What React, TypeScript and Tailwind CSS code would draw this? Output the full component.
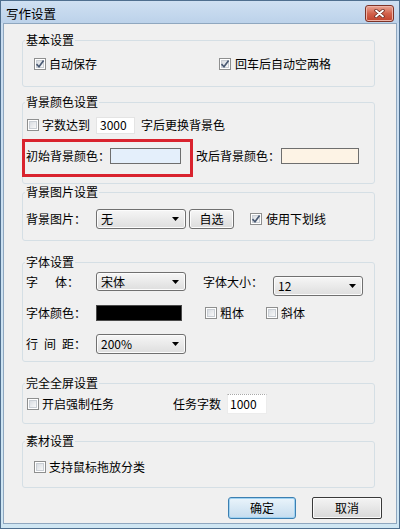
import React from 'react';

function Check({ checked = false }: { checked?: boolean }) {
  return (
    <span className="flex h-[12px] w-[12px] shrink-0 items-center justify-center border border-[#8e8f8f] bg-white">
      <span className="flex h-[8px] w-[8px] items-center justify-center border border-[#c9ced4] bg-gradient-to-br from-[#d9dde2] to-[#f8f8f8]">
        {checked && (
          <svg width="10" height="10" viewBox="0 0 10 10" className="overflow-visible">
            <path d="M1.5 5.2 L4 7.8 L8.6 1.6" fill="none" stroke="#4a5a73" strokeWidth="1.7" />
          </svg>
        )}
      </span>
    </span>
  );
}

function Combo({ value, w = 'w-[90px]', h = 'h-[20px]' }: { value: string; w?: string; h?: string }) {
  return (
    <div
      className={`${w} ${h} flex shrink-0 items-center justify-between rounded-[3px] border border-[#707070] bg-gradient-to-b from-[#f6f6f6] to-[#dedede] pl-[4px] pr-[6px] shadow-[inset_0_0_0_1px_#fcfcfc]`}
    >
      <span>{value}</span>
      <svg width="7" height="4" viewBox="0 0 7 4">
        <polygon points="0,0 7,0 3.5,4" fill="#000" />
      </svg>
    </div>
  );
}

function Legend({ children }: { children: React.ReactNode }) {
  return <div className="-mt-[8px] ml-[2px] w-fit bg-[#f0f0f0] px-[1px] leading-[14px]">{children}</div>;
}

export default function App() {
  return (
    <div className="flex h-[529px] w-[400px] flex-col border border-[#4f6f8f] bg-gradient-to-b from-[#c8dbef] to-[#cfe6f3] font-['Noto_Sans_CJK_SC','Noto_Sans',sans-serif] text-[12px] leading-[14px] text-black">
      {/* title bar */}
      <div className="flex h-[22px] shrink-0 items-start justify-between bg-gradient-to-b from-[#cfe0f2] to-[#bcd2ea] pl-[5px] pr-[5px]">
        <span className="pt-[6px] text-[12.5px]">写作设置</span>
        <div className="mt-[4px] flex h-[17px] w-[29px] items-center justify-center rounded-[3px] border border-[#7d3327] bg-gradient-to-b from-[#e9a595] via-[#d2624c] to-[#c0412b] shadow-[inset_0_0_0_1px_#eeb4a8]">
          <svg width="11" height="9" viewBox="0 0 11 9">
            <path d="M2 1.5 L9 7.5 M9 1.5 L2 7.5" stroke="#6b2a20" strokeWidth="3.4" strokeLinecap="round" />
            <path d="M2 1.5 L9 7.5 M9 1.5 L2 7.5" stroke="#fff" strokeWidth="1.8" strokeLinecap="round" />
          </svg>
        </div>
      </div>

      {/* client area */}
      <div className="mx-[2px] mb-[4px] flex flex-1 flex-col border border-[#8fa7bf] bg-[#f0f0f0]">
        {/* 基本设置 */}
        <div className="ml-[18px] mr-[21px] mt-[16px] h-[47px] rounded-[3px] border border-[#d5dfe5]">
          <Legend>基本设置</Legend>
          <div className="mt-[7px] flex h-[20px] items-center pl-[11px]">
            <div className="flex w-[185px] items-center gap-[3px]">
              <Check checked />
              <span>自动保存</span>
            </div>
            <div className="flex items-center gap-[4px]">
              <Check checked />
              <span>回车后自动空两格</span>
            </div>
          </div>
        </div>

        {/* 背景颜色设置 */}
        <div className="ml-[18px] mr-[21px] mt-[15px] h-[82px] rounded-[3px] border border-[#d5dfe5]">
          <Legend>背景颜色设置</Legend>
          <div className="mt-[6px] flex h-[20px] items-center pl-[4px]">
            <Check />
            <span className="ml-[3px]">字数达到</span>
            <div className="ml-[6px] flex h-[17px] w-[39px] items-center border border-[#e4e4e4] bg-white pl-[3px]">3000</div>
            <span className="ml-[6px]">字后更换背景色</span>
          </div>
          <div className="-ml-[1px] mt-[4px] flex items-start">
            <div className="flex h-[38px] w-[171px] items-start border-[3px] border-[#d9232e] pl-[1px] pt-[6px]">
              <span className="flex h-[16px] w-[84px] items-center">初始背景颜色：</span>
              <div className="h-[16px] w-[71px] border border-[#6e6e6e] bg-[#e4effb]" />
            </div>
            <div className="ml-[3px] mt-[9px] flex items-start">
              <span className="flex h-[16px] w-[85px] items-center">改后背景颜色：</span>
              <div className="h-[16px] w-[78px] border border-[#6e6e6e] bg-[#fdf3e5]" />
            </div>
          </div>
        </div>

        {/* 背景图片设置 */}
        <div className="ml-[18px] mr-[21px] mt-[8px] h-[49px] rounded-[3px] border border-[#d5dfe5]">
          <Legend>背景图片设置</Legend>
          <div className="mt-[10px] flex h-[20px] items-center pl-[3px]">
            <span className="w-[70px]">背景图片：</span>
            <Combo value="无" />
            <div className="ml-[3px] flex h-[20px] w-[45px] items-center justify-center rounded-[3px] border border-[#707070] bg-gradient-to-b from-[#f6f6f6] to-[#dcdcdc] shadow-[inset_0_0_0_1px_#fcfcfc]">
              自选
            </div>
            <span className="ml-[16px]">
              <Check checked />
            </span>
            <span className="ml-[4px]">使用下划线</span>
          </div>
        </div>

        {/* 字体设置 */}
        <div className="ml-[18px] mr-[21px] mt-[21px] h-[100px] rounded-[3px] border border-[#d5dfe5]">
          <Legend>字体设置</Legend>
          <div className="mt-[3px] flex items-start pl-[3px]">
            <span className="flex h-[19px] w-[70px] items-center">
              字<span className="ml-[17px]">体：</span>
            </span>
            <Combo value="宋体" h="h-[19px]" />
            <span className="ml-[17px] flex h-[19px] w-[70px] items-center">字体大小：</span>
            <div className="mt-[4px]">
              <Combo value="12" />
            </div>
          </div>
          <div className="mt-[7px] flex h-[20px] items-center pl-[3px]">
            <span className="w-[70px]">字体颜色：</span>
            <div className="h-[16px] w-[86px] border border-[#4a4a4a] bg-black" />
            <span className="ml-[23px]">
              <Check />
            </span>
            <span className="ml-[3px]">粗体</span>
            <span className="ml-[22px]">
              <Check />
            </span>
            <span className="ml-[3px]">斜体</span>
          </div>
          <div className="mt-[11px] flex h-[20px] items-center pl-[3px]">
            <span className="flex w-[70px] gap-[6px]">
              <span>行</span>
              <span>间</span>
              <span>距：</span>
            </span>
            <Combo value="200%" />
          </div>
        </div>

        {/* 完全全屏设置 */}
        <div className="ml-[18px] mr-[21px] mt-[21px] h-[41px] rounded-[3px] border border-[#d5dfe5]">
          <Legend>完全全屏设置</Legend>
          <div className="mt-[4px] flex h-[20px] items-center pl-[4px]">
            <div className="flex w-[146px] items-center gap-[3px]">
              <Check />
              <span>开启强制任务</span>
            </div>
            <span>任务字数</span>
            <div className="ml-[6px] flex h-[20px] w-[40px] items-center border border-[#ececec] [border-top-color:#a8a8a8] [border-top-style:dotted] bg-white pl-[2px]">
              1000
            </div>
          </div>
        </div>

        {/* 素材设置 */}
        <div className="ml-[18px] mr-[21px] mt-[17px] h-[47px] rounded-[3px] border border-[#d5dfe5]">
          <Legend>素材设置</Legend>
          <div className="mt-[9px] flex h-[20px] items-center gap-[3px] pl-[11px]">
            <Check />
            <span>支持鼠标拖放分类</span>
          </div>
        </div>

        {/* buttons */}
        <div className="mt-[9px] flex justify-end gap-[16px] pr-[14px]">
          <div className="flex h-[22px] w-[68px] items-center justify-center rounded-[3px] border border-[#3c7fb1] bg-gradient-to-b from-[#eaf4fb] to-[#c5dcee] shadow-[inset_0_0_0_1px_#9fd2f2]">
            确定
          </div>
          <div className="flex h-[22px] w-[70px] items-center justify-center rounded-[2px] border border-[#3a3a3a] bg-gradient-to-b from-[#f4f4f4] to-[#d9d9d9] shadow-[inset_0_0_0_1px_#fbfbfb]">
            取消
          </div>
        </div>
      </div>
    </div>
  );
}
